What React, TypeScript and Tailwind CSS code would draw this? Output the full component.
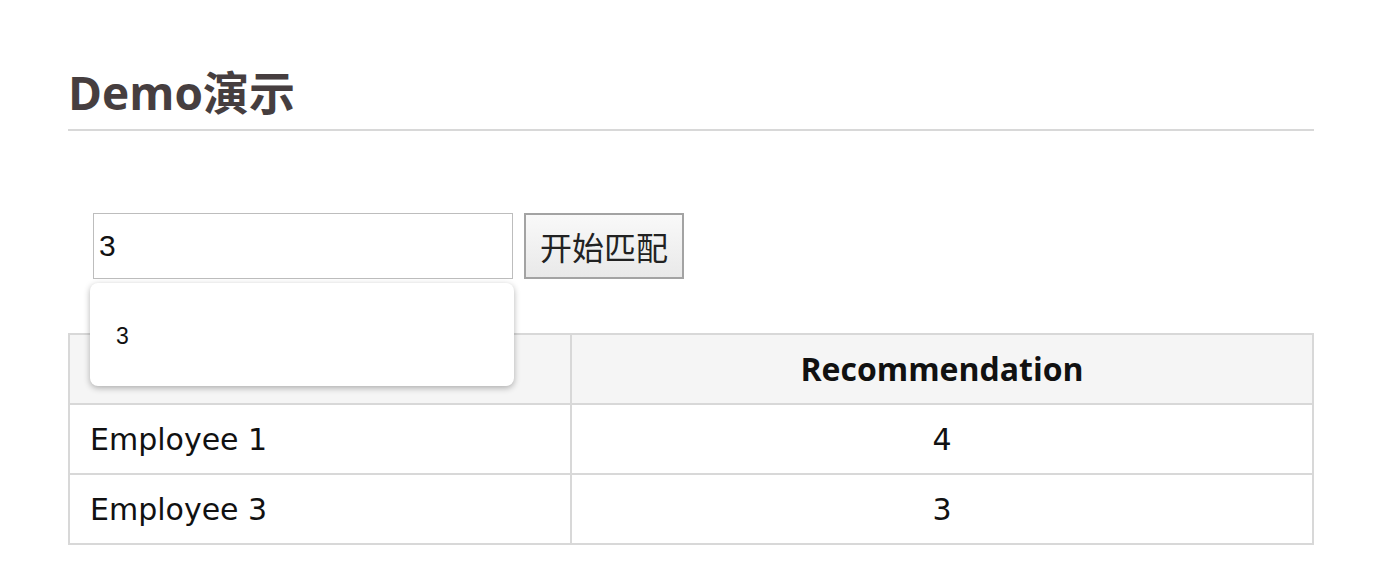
import React from "react";

const rows = [
    { name: "Employee 1", score: "4" },
    { name: "Employee 3", score: "3" },
];

export default function App() {
    return (
        <div className="min-h-[588px] bg-white pl-[68px] pr-[70px] pt-[62px] font-['Open_Sans','Noto_Sans_CJK_SC',sans-serif]">
            {/* Heading */}
            <h1 className="border-b-2 border-[#d8d8d8] pb-[6px] text-[46px] font-bold leading-[61px] text-[#463e3f]">
                Demo演示
            </h1>

            {/* Search form */}
            <div className="relative ml-[25px] mt-[82px] flex items-center gap-[11px]">
                <input
                    type="text"
                    readOnly
                    value="3"
                    className="h-[66px] w-[420px] border border-[#bdbdbd] px-[5px] font-['Liberation_Sans',sans-serif] text-[30px] text-[#111] outline-none"
                />
                <button className="h-[66px] w-[160px] border-2 border-[#a3a3a3] bg-gradient-to-b from-[#f9f9f9] to-[#e9e9e9] font-['Noto_Sans_CJK_SC',sans-serif] text-[32px] text-[#222]">
                    开始匹配
                </button>

                {/* Autocomplete dropdown */}
                <div className="absolute left-[-3px] top-[70px] z-10 h-[103px] w-[424px] rounded-[8px] bg-white px-[26px] pt-[36px] font-['Liberation_Sans',sans-serif] text-[23px] text-[#111] shadow-[0_2px_6px_rgba(0,0,0,0.3)]">
                    3
                </div>
            </div>

            {/* Results table */}
            <table className="mt-[54px] w-full border-collapse border-2 border-[#d8d8d8] font-['DejaVu_Sans',sans-serif] text-[30px] text-[#111]">
                <thead>
                    <tr className="h-[70px] bg-[#f5f5f5]">
                        <th className="w-[502px] border-2 border-[#d8d8d8] font-['Open_Sans',sans-serif] text-[32px] font-bold">
                            Name
                        </th>
                        <th className="border-2 border-[#d8d8d8] font-['Open_Sans',sans-serif] text-[32px] font-bold">
                            Recommendation
                        </th>
                    </tr>
                </thead>
                <tbody>
                    {rows.map((row) => (
                        <tr key={row.name} className="h-[70px]">
                            <td className="border-2 border-[#d8d8d8] px-[20px]">{row.name}</td>
                            <td className="border-2 border-[#d8d8d8] text-center">{row.score}</td>
                        </tr>
                    ))}
                </tbody>
            </table>
        </div>
    );
}
